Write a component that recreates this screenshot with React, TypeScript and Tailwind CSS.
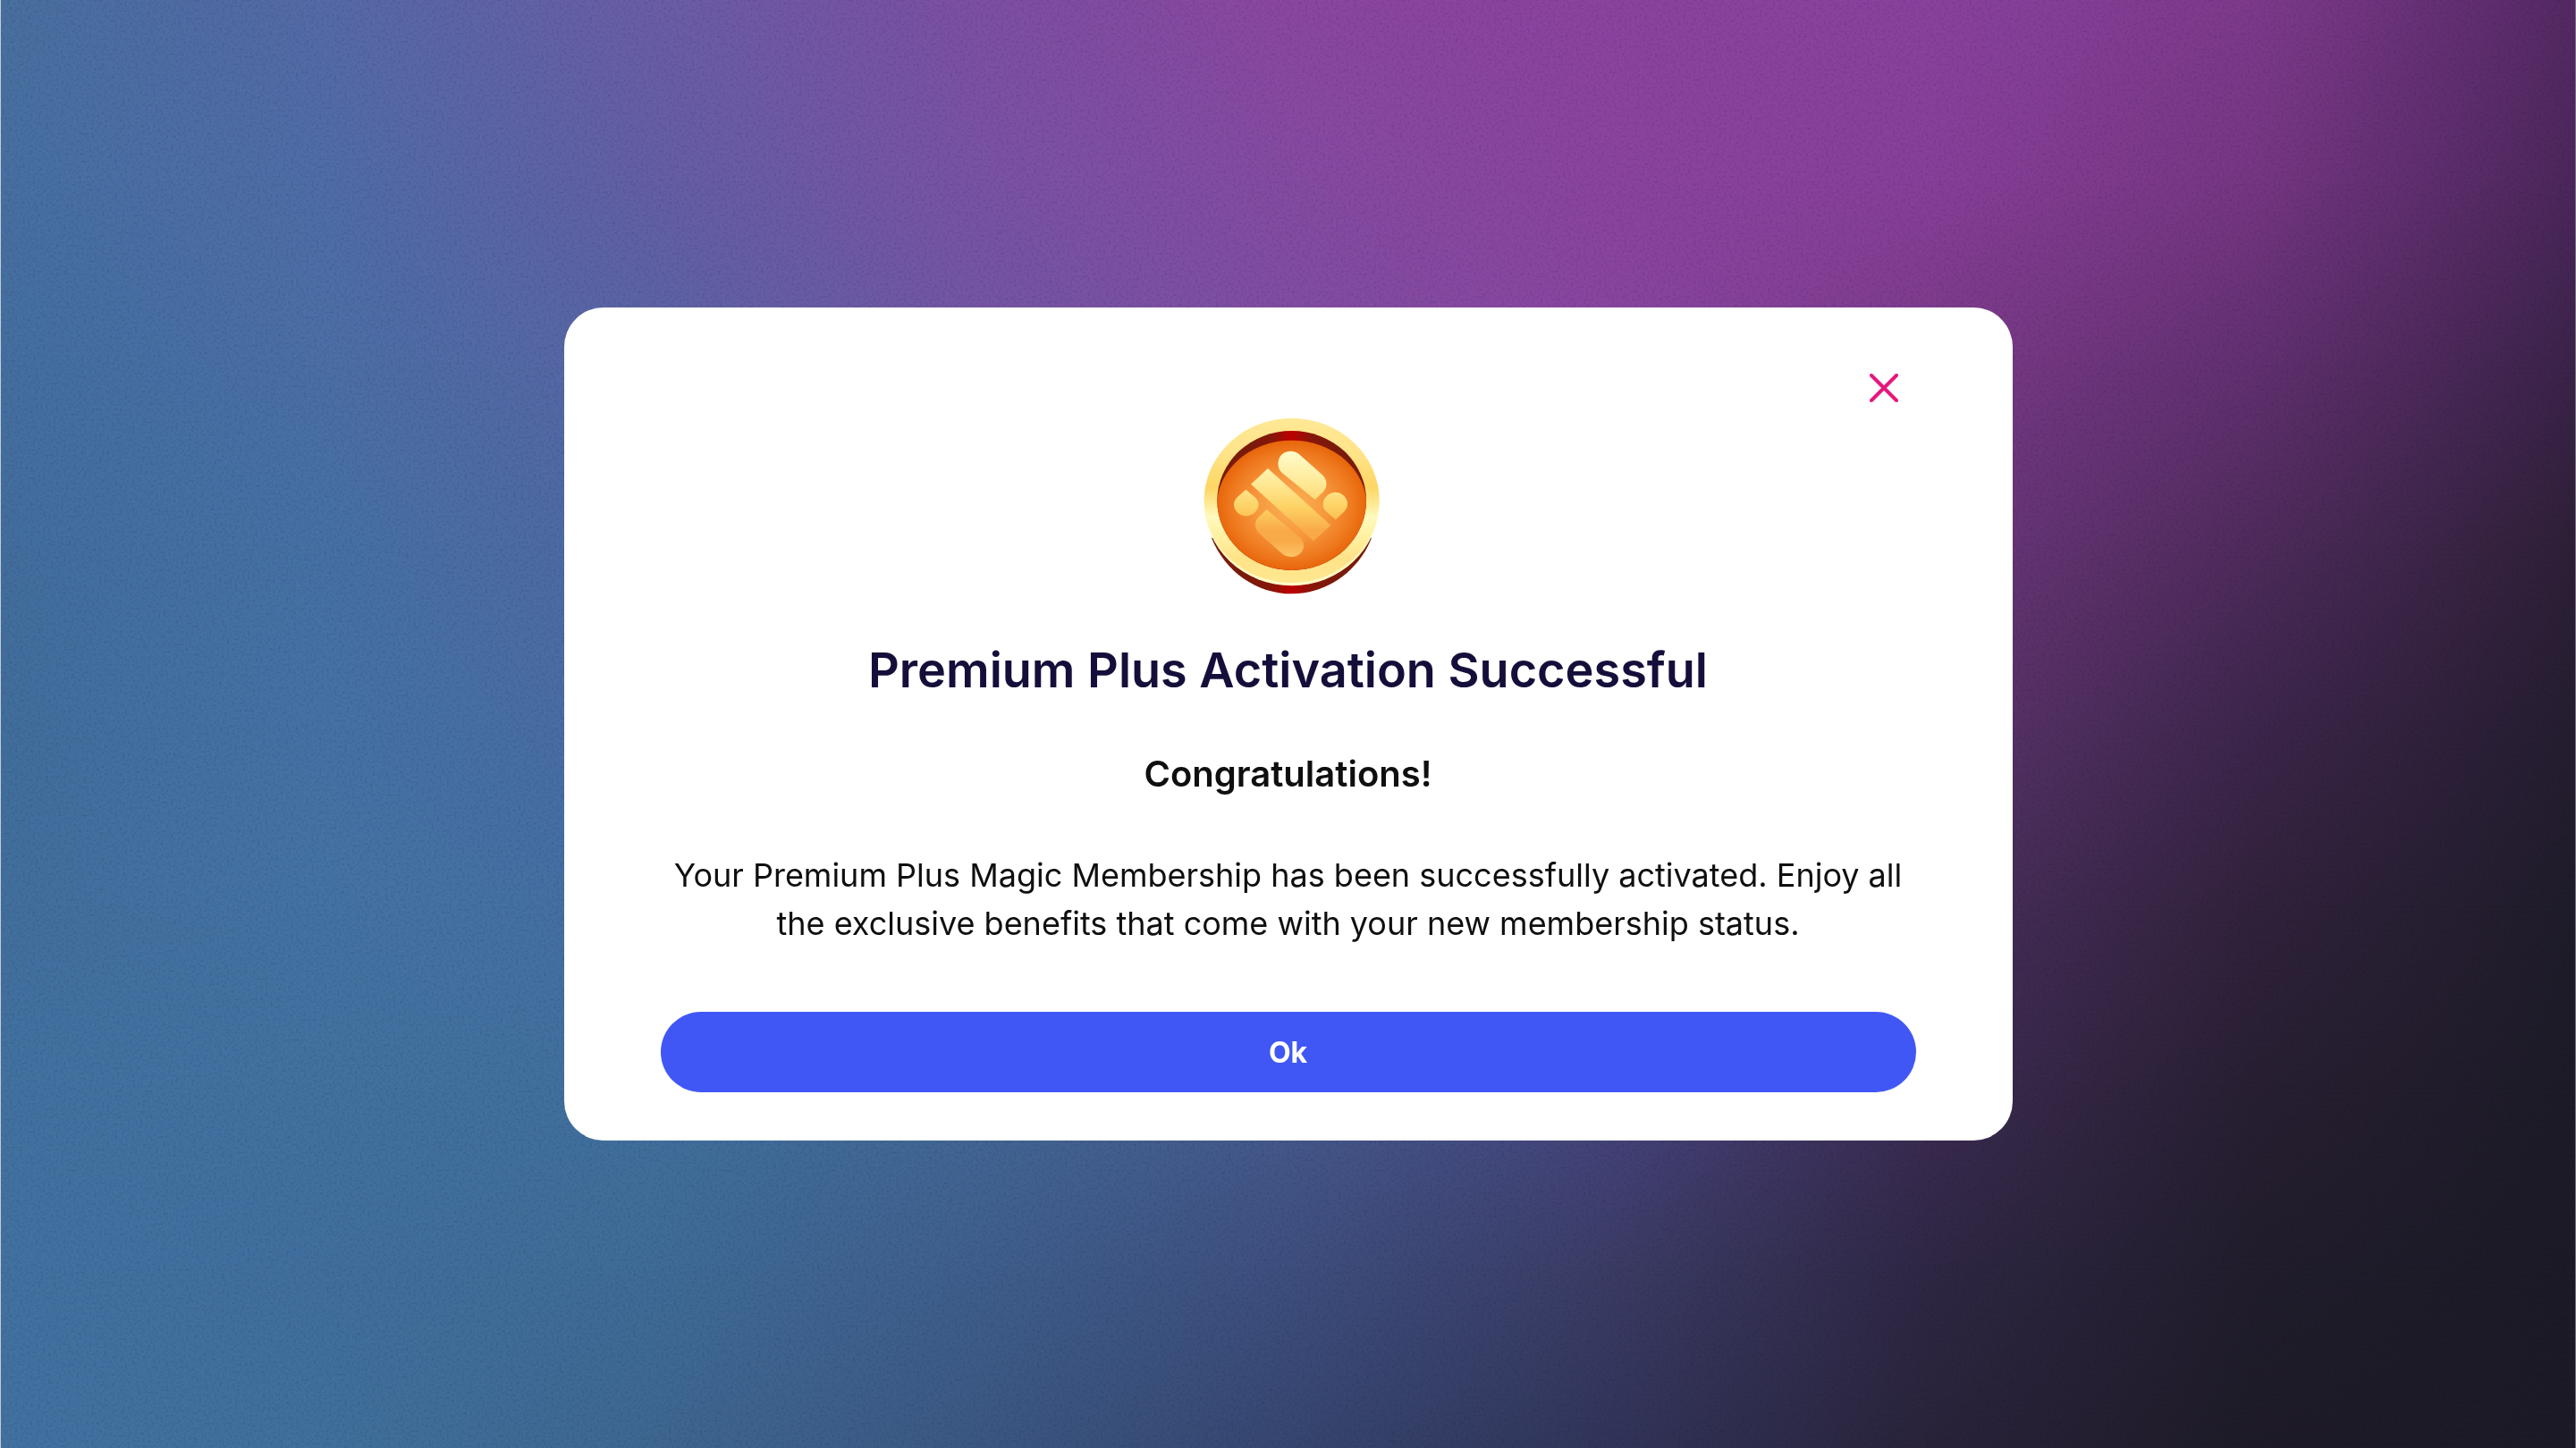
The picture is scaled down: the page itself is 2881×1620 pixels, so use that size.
import { useState } from "react";

// Colours of the backdrop, sampled on a grid: each row lists nine evenly spaced stops.
const meshRows: { y: number; stops: string[] }[] = [
  { y: 0, stops: ["#48709f", "#556aa6", "#6a5ea6", "#7c50a2", "#8b47a0", "#8c439e", "#8a429d", "#7e3a8c", "#552963"] },
  { y: 125, stops: ["#4770a1", "#4f6da6", "#635fa5", "#7953a4", "#854ba1", "#8b449e", "#883f98", "#763682", "#4b275b"] },
  { y: 250, stops: ["#446f9f", "#4b6fa5", "#5965a4", "#7157a3", "#7f4ea2", "#89469f", "#7b3a88", "#623070", "#3b2349"] },
  { y: 375, stops: ["#426e9d", "#4671a3", "#5069a3", "#645ba2", "#7550a2", "#81489f", "#6d377c", "#4f2b5c", "#2e2037"] },
  { y: 500, stops: ["#416e9c", "#4572a4", "#4a6ca3", "#5861a1", "#65579e", "#6f4b92", "#5d346d", "#3d264b", "#251d30"] },
  { y: 625, stops: ["#426f9d", "#4473a2", "#456fa1", "#4a679b", "#525990", "#5a4785", "#4a2f5d", "#31223c", "#1f1c2a"] },
  { y: 750, stops: ["#4272a0", "#42729f", "#41709d", "#436997", "#465b8d", "#474580", "#3d2b52", "#281f32", "#1d1b27"] },
  { y: 875, stops: ["#4272a0", "#416f9d", "#3f6c97", "#3f5f8c", "#3e4f7e", "#3b3c65", "#2f2744", "#211d2c", "#1c1a26"] },
  { y: 1000, stops: ["#4272a0", "#40709c", "#3e6790", "#3b5882", "#36466f", "#313459", "#29233a", "#1e1b27", "#1c1a26"] },
];

function Backdrop() {
  return (
    <>
      <svg aria-hidden="true" className="absolute inset-0 size-full" viewBox="0 0 1000 1000" preserveAspectRatio="none">
        <defs>
          {meshRows.map((row, i) => (
            <linearGradient key={row.y} id={`row${i}`}>
              {row.stops.map((color, j) => (
                <stop key={j} offset={j / (row.stops.length - 1)} stopColor={color} />
              ))}
            </linearGradient>
          ))}
          {meshRows.slice(1).map((row, i) => (
            <g key={row.y}>
              <linearGradient
                id={`fade${i + 1}`}
                gradientUnits="userSpaceOnUse"
                x1="0"
                x2="0"
                y1={meshRows[i].y}
                y2={row.y}
              >
                <stop offset="0" stopColor="#fff" stopOpacity="0" />
                <stop offset="1" stopColor="#fff" />
              </linearGradient>
              <mask id={`mask${i + 1}`} maskUnits="userSpaceOnUse" x="0" y="0" width="1000" height="1000">
                <rect width="1000" height="1000" fill={`url(#fade${i + 1})`} />
              </mask>
            </g>
          ))}
        </defs>
        {meshRows.map((row, i) => (
          <rect key={row.y} width="1000" height="1000" fill={`url(#row${i})`} mask={i ? `url(#mask${i})` : undefined} />
        ))}
      </svg>
      {/* Fine dark grain; multiplied so that it fades out in the dark corner. */}
      <svg aria-hidden="true" className="absolute inset-0 size-full mix-blend-multiply">
        <filter id="grain" x="0" y="0" width="100%" height="100%" colorInterpolationFilters="sRGB">
          <feTurbulence type="fractalNoise" baseFrequency="0.35" numOctaves="2" seed="4" />
          <feColorMatrix values="0 0 0 0 0.2  0 0 0 0 0.2  0 0 0 0 0.5  1.6 0 0 0 -0.7" />
        </filter>
        <rect width="100%" height="100%" filter="url(#grain)" opacity="0.22" />
      </svg>
    </>
  );
}

function Coin() {
  return (
    <svg role="img" aria-label="Premium Plus coin" className="size-[216px]" viewBox="39 6 648 648">
      <defs>
        <linearGradient id="coinRed">
          <stop offset="0.2" stopColor="#7a1a0a" />
          <stop offset="0.36" stopColor="#84170a" />
          <stop offset="0.5" stopColor="#bd0000" />
          <stop offset="0.64" stopColor="#84170a" />
          <stop offset="0.8" stopColor="#7a1a0a" />
        </linearGradient>
        <linearGradient id="coinGold" x1="0" x2="0" y1="0" y2="1">
          <stop offset="0" stopColor="#ffe896" />
          <stop offset="0.2" stopColor="#ffe48a" />
          <stop offset="0.42" stopColor="#fdd664" />
          <stop offset="0.6" stopColor="#fff9bd" />
          <stop offset="0.72" stopColor="#fff1a2" />
          <stop offset="0.85" stopColor="#ffe389" />
          <stop offset="1" stopColor="#ffe88f" />
        </linearGradient>
        <radialGradient id="coinOrange">
          <stop offset="0" stopColor="#fbb257" />
          <stop offset="0.5" stopColor="#f6963c" />
          <stop offset="0.8" stopColor="#ef7b20" />
          <stop offset="1" stopColor="#e8650a" />
        </radialGradient>
        <linearGradient id="coinMark" gradientUnits="userSpaceOnUse" x1="0" x2="0" y1="165" y2="520">
          <stop offset="0" stopColor="#fffccc" />
          <stop offset="0.3" stopColor="#ffe996" />
          <stop offset="0.53" stopColor="#fdd264" />
          <stop offset="0.75" stopColor="#f9aa48" />
          <stop offset="0.85" stopColor="#f9aa48" />
          <stop offset="1" stopColor="#fdc468" />
        </linearGradient>
        <clipPath id="coinWell">
          <ellipse cx="374" cy="330" rx="250" ry="234" />
        </clipPath>
      </defs>
      <path d="M105 455C150 568 256 643 374 643 492 643 598 568 642 455Z" fill="url(#coinRed)" />
      <ellipse cx="374" cy="335" rx="294" ry="281" fill="#fffbc8" />
      <ellipse cx="374" cy="330" rx="294" ry="276" fill="url(#coinGold)" />
      <ellipse cx="374" cy="330" rx="250" ry="234" fill="url(#coinRed)" />
      <ellipse cx="374" cy="346" rx="251" ry="218" fill="url(#coinOrange)" clipPath="url(#coinWell)" />
      <g fill="url(#coinMark)">
        <path d="M452 327 342 238C316 214 328 164 370 164 382 164 391 168 399 175L476 243C493 259 496 282 480 301Z" />
        <path d="M294 222 237 275 447 465 505 413Z" />
        <path d="M220 293 250 318C280 344 252 382 220 382 190 382 164 345 192 318Z" />
        <path d="M521 394 492 369C463 344 488 302 521 302 552 302 577 341 549 368Z" />
        <path d="M290 360 400 452C431 480 407 519 373 519 360 519 349 515 340 507L265 440C250 426 247 402 262 386Z" />
      </g>
    </svg>
  );
}

export default function App() {
  const [open, setOpen] = useState(true);
  const close = () => setOpen(false);

  return (
    <main className="relative isolate flex min-h-screen items-center justify-center font-['Inter',sans-serif]">
      <Backdrop />
      <div aria-hidden="true" className="absolute inset-0 border-l border-r border-l-[#c5cad0] border-r-[#77777f]" />
      {open && (
        <section
          role="dialog"
          aria-modal="true"
          aria-labelledby="dialog-title"
          className="relative flex w-full max-w-[1620px] flex-col items-center rounded-[44px] bg-white px-[108px] pt-[108px] pb-[54px] text-center text-[#0f0f10]"
        >
          <button
            type="button"
            aria-label="Close"
            onClick={close}
            className="absolute top-[54px] right-[108px] flex size-[72px] items-center justify-center text-[#e5197d]"
          >
            <svg
              className="size-8"
              viewBox="0 0 32 32"
              fill="none"
              stroke="currentColor"
              strokeWidth="4"
              strokeLinecap="round"
            >
              <path d="M2 2 30 30M30 2 2 30" />
            </svg>
          </button>
          <Coin />
          <h1 id="dialog-title" className="mt-[50px] text-[54px] leading-[64px] font-semibold text-[#140f3a]">
            Premium Plus Activation Successful
          </h1>
          <h2 className="mt-[60px] text-[40px] leading-[48px] font-semibold">Congratulations!</h2>
          <p className="mt-[62px] text-[36px] leading-[54px]">
            Your Premium Plus Magic Membership has been successfully activated. Enjoy all the exclusive benefits that
            come with your new membership status.
          </p>
          <button
            type="button"
            onClick={close}
            className="mt-[72px] h-[90px] w-full rounded-full bg-[#4057f5] pt-0.5 text-[32px] font-bold text-white"
          >
            Ok
          </button>
        </section>
      )}
    </main>
  );
}
